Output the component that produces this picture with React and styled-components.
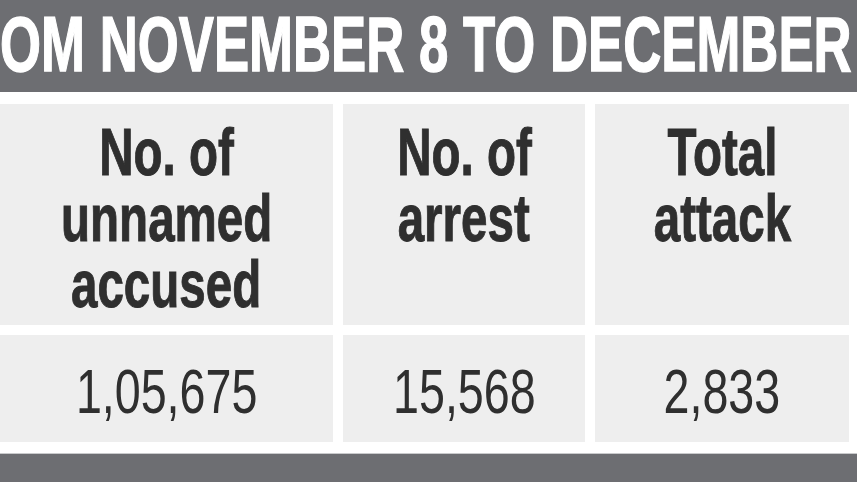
import styled, { createGlobalStyle } from 'styled-components';

const GlobalStyle = createGlobalStyle`
  html, body {
    margin: 0;
    padding: 0;
    background: #ffffff;
  }
  body {
    font-family: "Liberation Sans", Arial, sans-serif;
  }
`;

const headers = [
  ['No. of', 'unnamed', 'accused'],
  ['No. of', 'arrest'],
  ['Total', 'attack'],
];

const values = ['1,05,675', '15,568', '2,833'];

function App() {
  return (
    <Page>
      <GlobalStyle />
      <TitleBar>
        <Squeeze $scale={0.676}>OM NOVEMBER 8 TO DECEMBER</Squeeze>
      </TitleBar>

      <Table>
        {headers.map((lines, i) => (
          <HeadCell key={`h${i}`}>
            {lines.map(line => (
              <HeadLine key={line}>
                <Squeeze $scale={0.72}>{line}</Squeeze>
              </HeadLine>
            ))}
          </HeadCell>
        ))}
        {values.map((value, i) => (
          <ValueCell key={`v${i}`}>
            <Squeeze $scale={0.74}>{value}</Squeeze>
          </ValueCell>
        ))}
      </Table>

      <FooterBar />
    </Page>
  );
}

const Page = styled.div`
  width: 857px;
  height: 482px;
  display: flex;
  flex-direction: column;
  overflow: hidden;
  background: #ffffff;
`;

const Squeeze = styled.span`
  display: inline-block;
  white-space: nowrap;
  transform: scaleX(${p => p.$scale});
  transform-origin: center;
`;

const TitleBar = styled.div`
  height: 92px;
  flex-shrink: 0;
  background: #6d6e72;
  color: #ffffff;
  font-weight: 700;
  font-size: 78px;
  line-height: 88px;
  padding-right: 5px;
  -webkit-text-stroke: 1.4px #ffffff;
  display: flex;
  justify-content: center;
  overflow: hidden;
`;

const Table = styled.div`
  display: grid;
  grid-template-columns: 333px 242px 254px;
  grid-template-rows: 221px 107px;
  gap: 10px;
  margin-top: 12px;
  color: #2f2f2f;
`;

const Cell = styled.div`
  background: #eeeeee;
  display: flex;
  flex-direction: column;
  align-items: center;
`;

const HeadCell = styled(Cell)`
  padding-top: 15px;
  font-weight: 700;
  font-size: 66px;
  line-height: 66px;
  -webkit-text-stroke: 1px #2f2f2f;
`;

const HeadLine = styled.div`
  white-space: nowrap;
`;

const ValueCell = styled(Cell)`
  justify-content: center;
  padding-top: 6px;
  box-sizing: border-box;
  font-size: 63px;
  line-height: 63px;
`;

const FooterBar = styled.div`
  margin-top: 11px;
  flex: 1;
  background: #6d6e72;
  border-top: 1px solid #c9cacc;
`;

export default App;
